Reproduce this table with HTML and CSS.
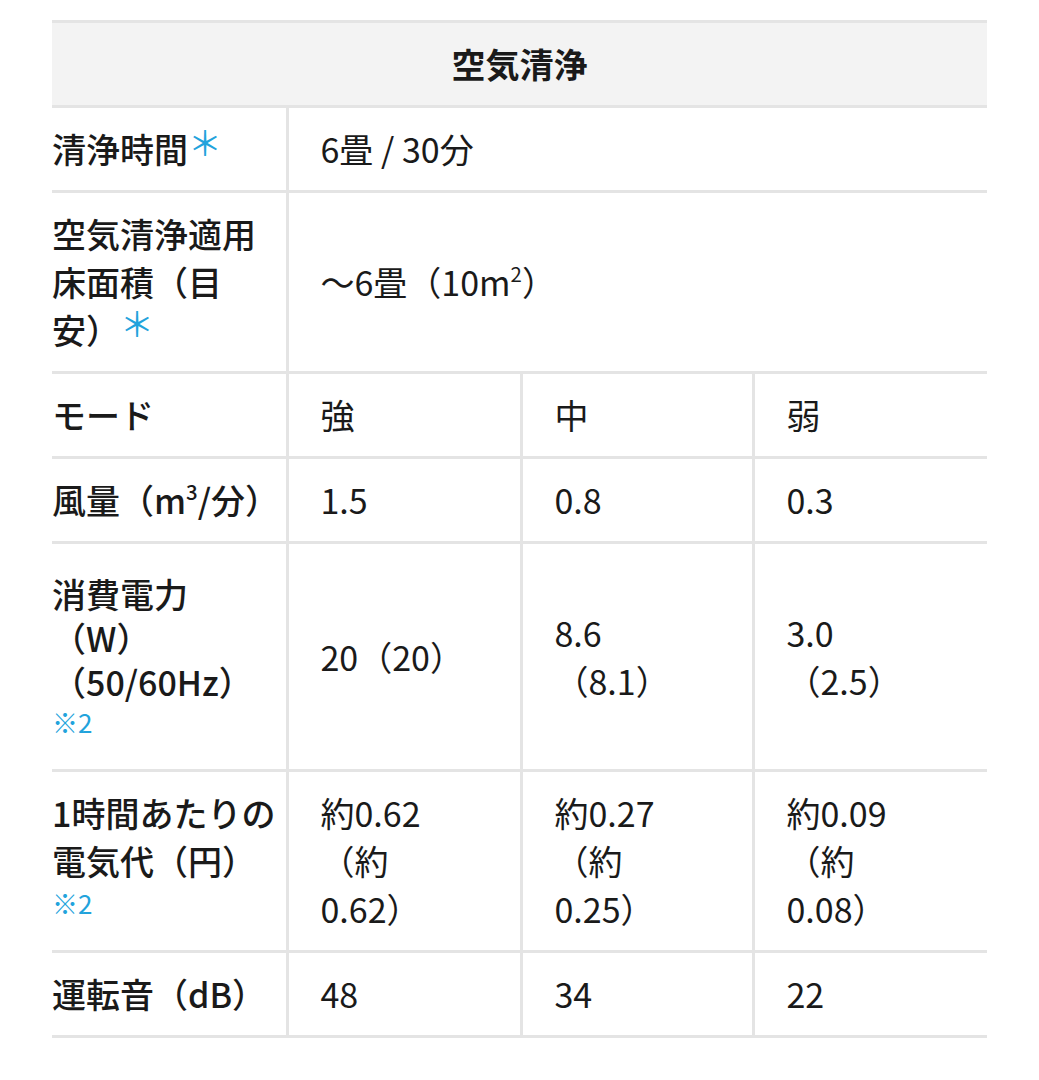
FILE: index.html
```html
<!DOCTYPE html>
<html lang="ja">
<head>
<meta charset="utf-8">
<title>空気清浄</title>
<link rel="stylesheet" href="styles.css">
</head>
<body>
<div class="page">
<table class="spec">
  <colgroup>
    <col class="c1"><col class="c2"><col class="c3"><col class="c4">
  </colgroup>
  <thead>
    <tr><th colspan="4" class="title">空気清浄</th></tr>
  </thead>
  <tbody>
    <tr>
      <th>清浄時間<span class="ast">＊</span></th>
      <td colspan="3">6畳 / 30分</td>
    </tr>
    <tr>
      <th>空気清浄適用<br>床面積（目<br>安）<span class="ast">＊</span></th>
      <td colspan="3">～6畳（10m<sup>2</sup>）</td>
    </tr>
    <tr>
      <th>モード</th>
      <td>強</td>
      <td>中</td>
      <td>弱</td>
    </tr>
    <tr>
      <th>風量（m<sup>3</sup>/分）</th>
      <td>1.5</td>
      <td>0.8</td>
      <td>0.3</td>
    </tr>
    <tr>
      <th class="tight">消費電力<br>（W）<br>（50/60Hz）<span class="note">※2</span></th>
      <td>20（20）</td>
      <td>8.6<br>（8.1）</td>
      <td>3.0<br>（2.5）</td>
    </tr>
    <tr>
      <th>1時間あたりの<br>電気代（円）<span class="note">※2</span></th>
      <td>約0.62<br>（約<br>0.62）</td>
      <td>約0.27<br>（約<br>0.25）</td>
      <td>約0.09<br>（約<br>0.08）</td>
    </tr>
    <tr>
      <th>運転音（dB）</th>
      <td>48</td>
      <td>34</td>
      <td>22</td>
    </tr>
  </tbody>
</table>
</div>
</body>
</html>
```

FILE: styles.css
```css
html, body {
  margin: 0;
  padding: 0;
  background: #ffffff;
}

body {
  font-family: "Noto Sans CJK JP", "Noto Sans", sans-serif;
  color: #1a1a1a;
}

.page {
  padding: 20px 0 0 52px;
}

.spec {
  width: 935px;
  table-layout: fixed;
  border-collapse: collapse;
  font-size: 34px;
  line-height: 48px;
}

.c1 { width: 235px; }
.c2 { width: 234px; }
.c3 { width: 232px; }
.c4 { width: 234px; }

.spec th,
.spec td {
  border-top: 3px solid #e4e4e4;
  border-bottom: 3px solid #e4e4e4;
  vertical-align: middle;
  text-align: left;
  padding: 17px 12px 17px 32px;
}

.spec td {
  font-weight: 400;
  border-left: 3px solid #e4e4e4;
}

.spec tbody th {
  font-weight: 500;
  padding-left: 0;
  padding-right: 4px;
}

.spec tbody th.tight {
  line-height: 44px;
  padding-top: 28px;
}

.spec .title {
  background: #f3f3f3;
  text-align: center;
  font-weight: 700;
  padding: 17px 0;
}

.ast {
  color: #22a3dc;
  font-weight: 400;
  vertical-align: 0.2em;
  line-height: 0;
}

.note {
  display: block;
  color: #22a3dc;
  font-size: 26px;
  line-height: 36px;
  padding-bottom: 12px;
  font-weight: 400;
}

sup {
  font-size: 0.6em;
  line-height: 0;
  vertical-align: 0.7em;
}
```
